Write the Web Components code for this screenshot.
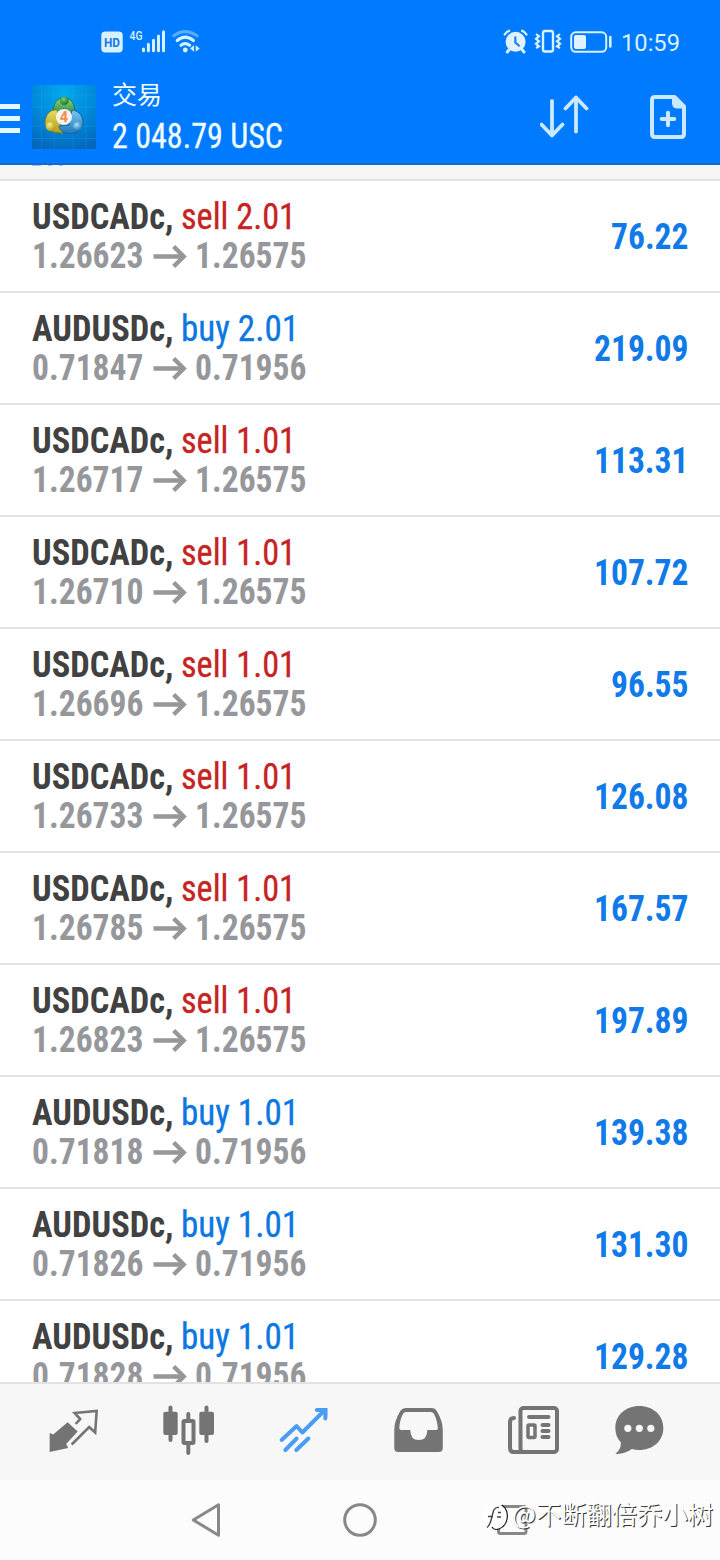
<!DOCTYPE html>
<html lang="zh">
<head>
<meta charset="utf-8">
<title>交易</title>
<style>
html,body{margin:0;padding:0}
body{width:720px;height:1560px;overflow:hidden;background:#fff;font-family:Roboto,"Noto Sans CJK SC",sans-serif}
</style>
</head>
<body>
<trade-app></trade-app>
<script>
/* Text squeezed horizontally to a given advance width */
class FitText extends HTMLElement{
  connectedCallback(){
    const w=+this.getAttribute('w');
    const r=this.attachShadow({mode:'open'});
    r.innerHTML=`<style>:host{display:inline-block;width:${w}px;white-space:pre;vertical-align:top}
      span{display:inline-block;transform-origin:0 50%}</style><span><slot></slot></span>`;
    const s=r.querySelector('span');
    s.style.transform=`scaleX(${w/s.getBoundingClientRect().width})`;
  }
}
class StatusBar extends HTMLElement{
  connectedCallback(){
    this.attachShadow({mode:'open'}).innerHTML=`<style>
    :host{display:flex;justify-content:space-between;height:70px;padding:28px 40px 0 100px;box-sizing:border-box;color:#d8f1ff}
    svg{display:block}.r{display:flex}.t{font-size:24.5px;line-height:30px;letter-spacing:0}
    </style>
    <svg width="104" height="28" viewBox="100 28 104 28">
      <rect x="101.3" y="31.5" width="21.4" height="21" rx="4" fill="#d8f1ff"/>
      <text x="104" y="47" font-size="13.5" font-weight="700" fill="#1478e8" textLength="16" lengthAdjust="spacingAndGlyphs">HD</text>
      <text x="129.5" y="40" font-size="13" font-weight="500" fill="#d8f1ff" textLength="13" lengthAdjust="spacingAndGlyphs">4G</text>
      <g stroke="#d8f1ff" stroke-width="3" stroke-linecap="round"><path d="M143.5 49v1.7M148.4 44.3v6.4M153.5 40.3v10.4M158.5 36v14.7M163.5 31.7v19"/></g>
      <g fill="none" stroke="#d8f1ff" stroke-width="3.200" stroke-linecap="round">
        <path d="M173.8 35.8Q185 27.5 197 35.8" stroke="#57adff"/>
        <path d="M177.2 40.5Q185.3 33.8 193.4 40.5M181 45.3Q185.3 41.8 189.6 45.3"/></g>
      <circle cx="185.3" cy="50" r="2.4" fill="#d8f1ff"/><path d="M194 45.2v6.6L190 48.5zM195.700 45.2v6.6l4-3.3z" fill="#d8f1ff"/>
    </svg>
    <div class="r">
    <svg width="118" height="28" viewBox="503 28 118 28" fill="none" stroke="#d8f1ff">
      <circle cx="515.6" cy="41.7" r="10" fill="#e0f1ff" stroke="none"/>
      <path d="M509.300 49.5l-2 2.500M522 49.500l2 2.500" stroke-width="3" stroke-linecap="round"/>
      <path d="M504.700 34.500Q506.500 31.500 509 30.800M526.400 34.500Q524.600 31.500 522.200 30.800" stroke-width="2.400" stroke-linecap="round"/>
      <path d="M515.300 36.500v6l4.300 3.800" stroke="#1b80f5" stroke-width="2.200"/>
      <rect x="543" y="31" width="10" height="20.500" rx="2" stroke-width="2.400"/>
      <path d="M536 34l3 2.300-3 2.500 3 2.500-3 2.500 3 2.500-3 1.700M560 34l-3 2.300 3 2.500-3 2.500 3 2.500-3 2.500 3 1.700" stroke-width="2.200"/>
      <rect x="571.200" y="32.300" width="35" height="19.500" rx="4.500" stroke-width="2"/>
      <rect x="574" y="35" width="12" height="14" rx="2" fill="#e0f1ff" stroke="none"/>
      <path d="M610.300 37v9.500" stroke-width="2.600" stroke-linecap="round"/>
    </svg><fit-text class="t" w="59">10:59</fit-text></div>`;
  }
}
class AccountHeader extends HTMLElement{
  connectedCallback(){
    this.attachShadow({mode:'open'}).innerHTML=`<style>
    :host{display:flex;height:95px;box-sizing:border-box;border-bottom:2px solid #126bcb;color:#effcff}
    svg{display:block;flex:none}
    .menu{width:20px;margin-right:12px;padding-top:34px;display:grid;gap:7px;align-content:start}
    .menu i{height:5px;background:#e2f8ff}
    .logo{margin-top:15px}
    .info{flex:1;margin-left:16px;padding-top:5px}
    .title{font-size:25px;line-height:36px;font-family:"Noto Sans CJK SC",sans-serif}
    .bal{font-size:35px;line-height:44px;height:44px;font-stretch:75%;margin-top:4px;-webkit-text-stroke:.3px #effcff}
    </style>
    <div class="menu"><i></i><i></i><i></i></div>
    <svg class="logo" width="64" height="64" viewBox="0 0 64 64">
      <defs><radialGradient id="b" cx=".5" cy=".12" r=".95"><stop offset="0" stop-color="#00a9ef"/><stop offset=".55" stop-color="#0086d8"/><stop offset="1" stop-color="#0566bb"/></radialGradient>
      <linearGradient id="g" x2="0" y2="1"><stop stop-color="#8fd08a"/><stop offset="1" stop-color="#208635"/></linearGradient>
      <linearGradient id="y" x2="0" y2="1"><stop stop-color="#e8dc62"/><stop offset="1" stop-color="#ad9d1a"/></linearGradient>
      <linearGradient id="u" x2="0" y2="1"><stop stop-color="#7cc8f0"/><stop offset="1" stop-color="#1f79c0"/></linearGradient>
      <radialGradient id="gb" cx=".4" cy=".3" r=".7"><stop stop-color="#7fd069"/><stop offset="1" stop-color="#13712b"/></radialGradient>
      <radialGradient id="yb" cx=".4" cy=".3" r=".7"><stop stop-color="#fbf08a"/><stop offset="1" stop-color="#ad981a"/></radialGradient>
      <radialGradient id="ub" cx=".4" cy=".3" r=".7"><stop stop-color="#a9e2fb"/><stop offset="1" stop-color="#1c71b8"/></radialGradient></defs>
      <rect width="64" height="64" fill="url(#b)"/>
      <path d="M9.500 0v64M22 0v64M41 0v64M54 0v64M0 10h64M0 22h64M0 41h64M0 53.500h64" stroke="#52c0f2" stroke-opacity=".2" stroke-width=".8"/>
      <path d="M21 30c0-11 3-17 11-17s11 6 11 17l-6 1-5-8-6 8z" fill="url(#g)" stroke="#1b763e" stroke-width=".9"/>
      <path d="M25 25c-8-1-12 6-12 14 1 6 7 9 18 9l-3-10z" fill="url(#y)" stroke="#7f7d1c" stroke-width=".9"/>
      <path d="M40 25c8 1 11 7 11 14-1 6-7 11-16 9-5-1-8-4-8-7l10-1z" fill="url(#u)" stroke="#19609b" stroke-width=".9"/>
      <circle cx="32.300" cy="15.800" r="4.300" fill="url(#gb)"/><circle cx="18.500" cy="41.500" r="4.700" fill="url(#yb)"/><circle cx="45.500" cy="41.500" r="4.700" fill="url(#ub)"/>
      <circle cx="32" cy="32" r="8" fill="#f6f3ef"/>
      <text x="32" y="37.200" text-anchor="middle" font-size="14.500" font-weight="700" fill="#ee9148">4</text>
    </svg>
    <div class="info"><div class="title">交易</div><div class="bal"><fit-text w="171">2 048.79 USC</fit-text></div></div>
    <svg width="180" height="93" viewBox="540 70 180 93" fill="none" stroke="#c9e9ff" stroke-linecap="round" stroke-linejoin="round">
      <path d="M552 101v34M541.500 124.500L552 135.500l10.500-11M576 131.500V97.500M565.500 108.500L576 97.500l10.500 11" stroke-width="3.800"/>
      <path d="M674.500 97H655q-3 0-3 3v34q0 3 3 3h26q3 0 3-3v-27.500z" stroke-width="4"/>
      <path d="M672 96.500v6.500q0 5.500 5.500 5.500h7v-3l-9-9z" fill="#c9e9ff" stroke="none"/>
      <path d="M668 112.700v12.600M661.700 119h12.600" stroke-width="4"/>
    </svg>`;
  }
}
class TradeRow extends HTMLElement{
  connectedCallback(){
    const a=n=>this.getAttribute(n), amt=a('profit');
    this.attachShadow({mode:'open'}).innerHTML=`<style>
    :host{display:flex;height:112px;box-sizing:border-box;border-bottom:2px solid #e2e2e2;padding:17px 32px 0 32px;justify-content:space-between;background:#fff;font-size:36px;line-height:39px;font-weight:700;font-stretch:75%}
    .l{display:flex;height:39px}.s{color:#414141}.k{font-weight:400;margin-left:7px;-webkit-text-stroke:.3px currentColor}
    .sell{color:#c62323}.buy{color:#0b78e0}.p{color:#96979b}
    svg{display:block;margin:0 8px 0 9px}
    .amt{padding-top:20px;color:#0f7ae8}
    </style>
    <div><div class="l"><fit-text class="s" w="141.500">${a('symbol')},</fit-text><fit-text class="k ${a('side')}" w="${a('side')==='sell'?115:118}">${a('side')} ${a('lots')}</fit-text></div>
    <div class="l p"><fit-text w="111.500">${a('open')}</fit-text><svg width="34" height="39" viewBox="0 0 34 39" fill="none" stroke="#96979b" stroke-width="4.400"><path d="M.5 19.500H31M20.700 9.500l10 10-10 10"/></svg><fit-text w="111.500">${a('now')}</fit-text></div></div>
    <div class="amt"><fit-text w="${amt.length===5?77.5:94.5}">${amt}</fit-text></div>`;
  }
}
class TradeList extends HTMLElement{
  connectedCallback(){
    const data=[['USDCADc','sell','2.01','1.26623','76.22'],['AUDUSDc','buy','2.01','0.71847','219.09'],['USDCADc','sell','1.01','1.26717','113.31'],['USDCADc','sell','1.01','1.26710','107.72'],['USDCADc','sell','1.01','1.26696','96.55'],['USDCADc','sell','1.01','1.26733','126.08'],['USDCADc','sell','1.01','1.26785','167.57'],['USDCADc','sell','1.01','1.26823','197.89'],['AUDUSDc','buy','1.01','0.71818','139.38'],['AUDUSDc','buy','1.01','0.71826','131.30'],['AUDUSDc','buy','1.01','0.71828','129.28']];
    this.attachShadow({mode:'open'}).innerHTML=`<style>:host{display:block;height:1217px;overflow:hidden;background:#fff}
    .strip{height:14px;background:#f5f5f5;border-bottom:2px solid #e2e2e2;padding-left:32px;display:flex;gap:7px}
    .strip i{height:1px;width:4px;background:#a3bdff}.strip i:first-child{width:9px}</style>
    <div class="strip"><i></i><i></i><i></i></div>`+data.map(d=>`<trade-row symbol="${d[0]}" side="${d[1]}" lots="${d[2]}" open="${d[3]}" now="${d[0][0]==='U'?'1.26575':'0.71956'}" profit="${d[4]}"></trade-row>`).join('');
  }
}
class TabBar extends HTMLElement{
  connectedCallback(){
    const icons=[
    `<path d="M68 1422.300l10 9.200-11.500 12.500 2 4-18.500 4v-19l3.500 1.500z" fill="#747474"/><path d="M76 1424l4.500-5-5.500-6 22-2-1.500 21.500-6-5.500-17.500 17.500" fill="none" stroke="#747474" stroke-width="2.600"/>`,
    `<g fill="#747474"><rect x="163.300" y="1411.700" width="14.400" height="23.300" rx="2"/><rect x="199.300" y="1411.700" width="14.700" height="23.300" rx="2"/></g><path d="M170.500 1407.500v32.500M206.500 1407.500v33.500M188.300 1414v6M188.300 1445v8" stroke="#747474" stroke-width="4" stroke-linecap="round"/><rect x="183.500" y="1421" width="10" height="22" rx="1" fill="none" stroke="#747474" stroke-width="4"/>`,
    `<g fill="none" stroke="#4b9cf3" stroke-width="4" stroke-linecap="round"><path d="M281.300 1440l15-14 5.700 6.500L323.500 1411" stroke-linejoin="round"/><path d="M316.500 1410h8.500v8.500"/><path d="M285 1450l11.300-11.500M296 1450l12-11.500"/></g><path d="M318 1408h9v9z" fill="#4b9cf3"/>`,
    `<path fill-rule="evenodd" fill="#747474" transform="translate(.6 0)" d="M406 1408h25q4 0 5.500 3 6 10 6 19v18q0 4-4 4h-40.500q-4 0-4-4v-18q0-9 6-19 2-3 6-3zM405.500 1412q-1.500 0-2.500 1.500-3.500 6-4 14.500 0 2 2 2h9q0 10 8.500 10t8.500-10h9q2 0 1.500-2-.5-8-4-14.500-1-1.500-3-1.500z"/>`,
    `<g fill="none" stroke="#747474" stroke-width="4" stroke-linecap="round"><path d="M514 1418q-4 0-4 4v26q0 4 4 4"/><rect x="520.500" y="1408" width="36.500" height="44" rx="3"/><path d="M514 1452h40M529 1417h19.500M542.500 1425h6M542.500 1431h6M542.500 1437h6"/></g><rect x="528" y="1425" width="7" height="12.500" rx="1" fill="none" stroke="#747474" stroke-width="3.500"/>`,
    `<path fill="#747474" d="M639 1406c14 0 24 9.500 24 22s-10 22-24 22q-4 0-7.500-1-6.500 5-16.500 5 6-5 5.500-11.500-5.500-6-5.500-14.500c0-12.500 10-22 24-22z"/><g fill="#f7f7f7"><circle cx="627.500" cy="1428.300" r="3.600"/><circle cx="639" cy="1428.300" r="3.600"/><circle cx="650.500" cy="1428.300" r="3.600"/></g>`];
    this.attachShadow({mode:'open'}).innerHTML=`<style>:host{display:grid;grid-template-columns:repeat(6,1fr);justify-items:center;padding:0 16px;height:98px;box-sizing:border-box;border-top:2px solid #e2e2e2;background:#f7f7f7}svg{display:block}</style>`+
    icons.map((p,i)=>`<svg width="80" height="96" viewBox="${(33.333+i*114.667).toFixed(2)} 1384 80 96">${p}</svg>`).join('');
  }
}
class NavBar extends HTMLElement{
  connectedCallback(){
    this.attachShadow({mode:'open'}).innerHTML=`<style>:host{display:block;position:relative;height:80px;background:#fcfcfc}
    svg{display:block}.wm{position:absolute;left:512px;top:13px;font:25px/40px "Noto Sans CJK SC",sans-serif;color:#fff;text-shadow:1px 1px .6px #333}</style>
    <svg width="720" height="80" viewBox="0 1480 720 80" fill="none" stroke="#888" stroke-width="3">
      <path d="M218.500 1504.800v30.400L193.300 1520z" stroke-linejoin="round"/>
      <circle cx="360" cy="1520" r="15.300"/><rect x="498.500" y="1506.500" width="27.500" height="27" rx="2"/>
      <circle cx="495" cy="1516.500" r="12.500" fill="#fff" stroke="none"/>
      <path d="M502 1505c8 6 7 20-3 24-3 1-6 0-7-2" stroke="#222" stroke-width="1.300"/>
      <path d="M499 1507.500c-5-1-6 4-7 9s-2 9-5 11M488 1516.500h5M497 1517h4M498 1512.500h3" stroke="#444" stroke-width="1.400"/>
    </svg><div class="wm"><fit-text w="201">@不断翻倍乔小树</fit-text></div>`;
  }
}
class TradeApp extends HTMLElement{
  connectedCallback(){
    this.attachShadow({mode:'open'}).innerHTML=`<style>:host{display:flex;flex-direction:column;width:720px;height:1560px;overflow:hidden}.top{background:#007aff}</style>
    <div class="top"><status-bar></status-bar><account-header></account-header></div><trade-list></trade-list><tab-bar></tab-bar><nav-bar></nav-bar>`;
  }
}
customElements.define('trade-app',TradeApp);
customElements.define('status-bar',StatusBar);
customElements.define('account-header',AccountHeader);
customElements.define('trade-list',TradeList);
customElements.define('trade-row',TradeRow);
customElements.define('tab-bar',TabBar);
customElements.define('nav-bar',NavBar);
customElements.define('fit-text',FitText);
</script>
</body>
</html>
